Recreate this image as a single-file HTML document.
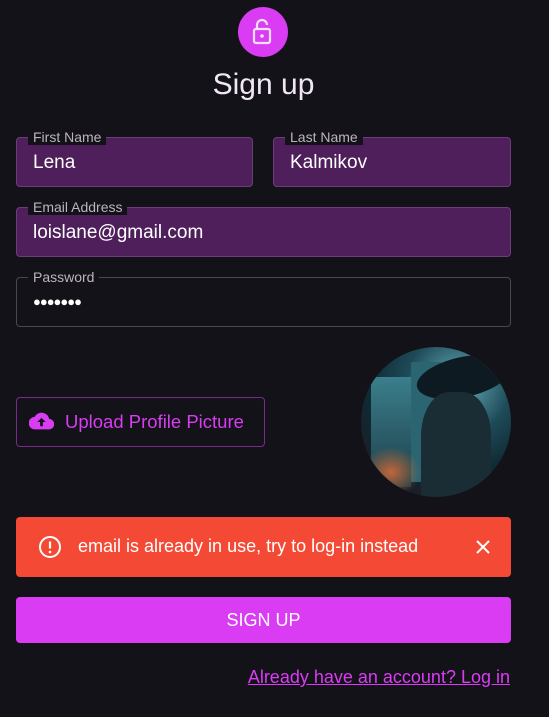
<!DOCTYPE html>
<html><head><style>
body{margin:0;width:549px;height:717px;background:#131218;font-family:"Liberation Sans",sans-serif;position:relative;overflow:hidden}
.a{position:absolute}
.f{position:absolute;box-sizing:border-box;border:1px solid #6c3d79;border-radius:4px;background:#4e1f5b}
.f.p{background:transparent;border-color:#4a4850}
.lab{position:absolute;top:-9px;left:11px;padding:0 5px;font-size:14px;color:#bdb4c2;background:#131218;line-height:16px}
.v{position:absolute;left:16px;top:14px;font-size:19px;color:#fff}
</style></head><body>
<div class="a" style="left:238px;top:7px;width:50px;height:50px;border-radius:50%;background:#d93cf3"></div>
<svg class="a" style="left:251px;top:18px" width="24" height="28" viewBox="0 0 24 28"><rect x="3" y="11" width="16" height="14" rx="2" fill="none" stroke="#f6e0fb" stroke-width="2.2"/><path d="M6 11V7a5 5 0 0 1 10 0" fill="none" stroke="#f6e0fb" stroke-width="2.2"/><circle cx="11" cy="18" r="1.8" fill="#f6e0fb"/></svg>
<div class="a" style="left:0;width:527px;top:68px;text-align:center;font-size:30px;color:#f0e6f6">Sign up</div>

<div class="f" style="left:16px;top:137px;width:237px;height:50px"><span class="lab">First Name</span><span class="v">Lena</span></div>
<div class="f" style="left:273px;top:137px;width:238px;height:50px"><span class="lab">Last Name</span><span class="v">Kalmikov</span></div>
<div class="f" style="left:16px;top:207px;width:495px;height:50px"><span class="lab">Email Address</span><span class="v">loislane@gmail.com</span></div>
<div class="f p" style="left:16px;top:277px;width:495px;height:50px"><span class="lab">Password</span><span class="v" style="font-size:13px;top:16px;letter-spacing:-1px">●●●●●●●</span></div>

<div class="a" style="left:16px;top:397px;width:249px;height:50px;box-sizing:border-box;border:1px solid #7a2a8c;border-radius:4px"></div>
<svg class="a" style="left:29px;top:410px" width="25" height="22" viewBox="0 0 24 20"><path d="M19.4 8A7.5 7.5 0 0 0 5.4 6 6 6 0 0 0 6 18h13a5 5 0 0 0 .4-10z" fill="#d93cf3"/><path d="M12 7l-4 4h2.7v4h2.6v-4H16z" fill="#131218"/></svg>
<div class="a" style="left:65px;top:411px;font-size:18.5px;color:#d93cf3">Upload Profile Picture</div>

<div class="a" style="left:361px;top:347px;width:150px;height:150px;border-radius:50%;overflow:hidden;background:radial-gradient(circle at 65% 25%,#bfe8ea 0,#4f8f9a 12%,#1e4a58 35%,#0f2a33 60%,#1a1e28 80%)">
<div class="a" style="left:10px;top:30px;width:40px;height:110px;background:linear-gradient(#3b7e8c,#1c3f48)"></div>
<div class="a" style="left:50px;top:15px;width:30px;height:120px;background:#2c6572"></div>
<div class="a" style="left:55px;top:10px;width:95px;height:40px;border-radius:50%;background:#0e1a22;transform:rotate(-12deg)"></div>
<div class="a" style="left:60px;top:45px;width:70px;height:110px;border-radius:40% 40% 0 0;background:#1a2c34"></div>
<div class="a" style="left:0;top:100px;width:60px;height:50px;background:radial-gradient(#c0673a 0,transparent 70%)"></div>
</div>

<div class="a" style="left:16px;top:517px;width:495px;height:60px;background:#f44a35;border-radius:4px"></div>
<svg class="a" style="left:38px;top:535px" width="24" height="24" viewBox="0 0 24 24"><circle cx="12" cy="12" r="10" fill="none" stroke="#fff" stroke-width="2"/><path d="M12 6.5v7" stroke="#fff" stroke-width="2.2"/><circle cx="12" cy="17" r="1.3" fill="#fff"/></svg>
<div class="a" style="left:78px;top:536px;font-size:18px;color:#fff">email is already in use, try to log-in instead</div>
<svg class="a" style="left:476px;top:540px" width="14" height="14" viewBox="0 0 14 14"><path d="M1 1l12 12M13 1L1 13" stroke="#fff" stroke-width="2"/></svg>

<div class="a" style="left:16px;top:597px;width:495px;height:46px;background:#d93cf3;border-radius:4px;color:#fff;font-size:18px;text-align:center;line-height:46px">SIGN UP</div>
<div class="a" style="right:39px;top:667px;font-size:18px;color:#d93cf3;text-decoration:underline">Already have an account? Log in</div>
</body></html>
